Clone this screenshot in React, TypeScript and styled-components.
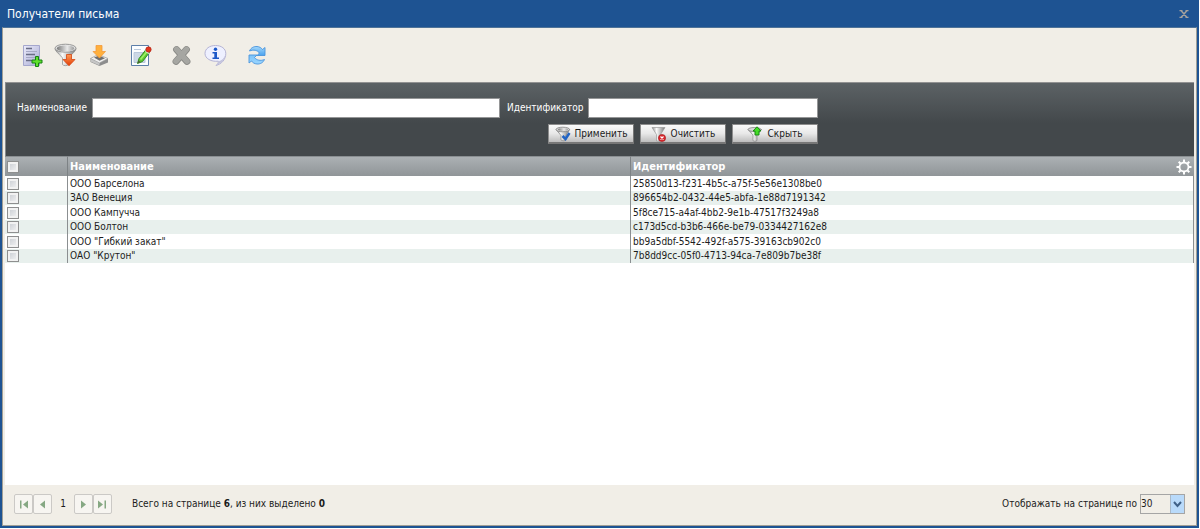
import React, { useState } from 'react';
import styled, { createGlobalStyle } from 'styled-components';

const GlobalStyle = createGlobalStyle`
  *, *::before, *::after { box-sizing: border-box; }
  body {
    margin: 0;
    background: #fff;
    color: #1c1c1c;
    font: 10px/14px 'DejaVu Sans Condensed', 'Noto Sans', sans-serif;
  }
  button, input, select { font: inherit; color: inherit; margin: 0; }
`;

const Page = styled.div`
  display: flex;
  min-height: 100vh;
  padding: 0 1px 1px 0;
`;

const Dialog = styled.section`
  flex: 1;
  min-width: 0;
  display: flex;
  flex-direction: column;
  padding: 0 2px 2px;
  background: #1e5392;
`;

const TitleBar = styled.header`
  display: flex;
  align-items: center;
  justify-content: space-between;
  height: 27px;
  padding: 0 5px;
`;

const Title = styled.h1`
  margin: 0;
  color: #fff;
  font-size: 12px;
  font-weight: normal;
`;

const CloseButton = styled.button`
  width: 16px;
  height: 16px;
  padding: 0;
  border: 0;
  background: none;
  svg { display: block; margin: auto; }
`;

const Content = styled.div`
  flex: 1;
  display: flex;
  flex-direction: column;
  border: 1px solid #a19f96;
  border-top-color: #4f7398;
  background: #f1eee7;
`;

const Toolbar = styled.div`
  display: flex;
  align-items: center;
  gap: 17px;
  height: 54px;
  padding: 0 17px;
`;

const ToolGroup = styled.div`
  display: flex;
  gap: 10px;
`;

const ToolButton = styled.button`
  width: 24px;
  height: 24px;
  padding: 0;
  border: 0;
  background: none;
  svg { display: block; }
`;

const Main = styled.div`
  flex: 1;
  display: flex;
  flex-direction: column;
  margin: 0 2px;
  background: #fff;
`;

const FilterPanel = styled.div`
  height: 74px;
  padding: 15px 11px 0;
  border-top: 1px solid #929292;
  border-left: 1px solid #85898b;
  background: linear-gradient(#5c6265, #43484b 55%);
`;

const FilterForm = styled.form`
  display: flex;
  flex-direction: column;
  gap: 6px;
  width: fit-content;
`;

const Fields = styled.div`
  display: flex;
  gap: 7px;
`;

const Field = styled.label`
  display: flex;
  align-items: center;
  gap: 3px;
  color: #fff;
`;

const FieldName = styled.span<{ $width: number }>`
  width: ${(p) => p.$width}px;
  white-space: nowrap;
`;

const TextInput = styled.input<{ $width: number }>`
  width: ${(p) => p.$width}px;
  height: 20px;
  padding: 0 3px;
  border: 1px solid #959697;
  border-radius: 0;
  background: #fff;
  color: #222;
`;

const Actions = styled.div`
  display: flex;
  justify-content: flex-end;
  gap: 6px;
`;

const ActionButton = styled.button`
  display: flex;
  align-items: center;
  justify-content: center;
  gap: 4px;
  width: 86px;
  height: 20px;
  padding: 0;
  border: 1px solid #8d8d8d;
  border-right-color: #777;
  border-bottom: 2px solid #777;
  background: linear-gradient(#fafafa, #e8e8e8 50%, #bdbdbd);
  white-space: nowrap;
`;

const Grid = styled.table`
  width: 100%;
  table-layout: fixed;
  border-collapse: separate;
  border-spacing: 0;
`;

const HeadRow = styled.tr`
  height: 20px;
  background: linear-gradient(#adb2b5, #909598);
`;

const HeadCell = styled.th`
  padding: 0 2px;
  border-top: 1px solid #8a8f92;
  border-right: 1px solid #7d8285;
  color: #fff;
  font-size: 11px;
  text-align: left;
  &:last-child { border-right: 0; }
`;

const HeadInner = styled.div`
  display: flex;
  align-items: center;
  justify-content: space-between;
`;

const GearButton = styled.button`
  padding: 0;
  border: 0;
  background: none;
  svg { display: block; }
`;

const Row = styled.tr`
  height: 15px;
  &:nth-child(even) { height: 14px; background: #e8f0ed; }
`;

const Cell = styled.td`
  padding: 0 2px;
  border-right: 1px solid #8b8f91;
  line-height: 14px;
`;

const Check = styled.input.attrs({ type: 'checkbox' })`
  display: block;
  appearance: none;
  width: 12px;
  height: 12px;
  border: 1px solid #8e8f8f;
  background: linear-gradient(135deg, #c6cad0, #f6f6f6);
  box-shadow: inset 0 0 0 2px #f2f2f2;
  &:checked { background: #38649a; }
`;

const Footer = styled.footer`
  display: flex;
  align-items: center;
  justify-content: space-between;
  height: 40px;
  padding: 0 11px 2px;
`;

const Pager = styled.nav`
  display: flex;
  align-items: center;
`;

const PageButton = styled.button`
  display: grid;
  place-items: center;
  width: 19px;
  height: 20px;
  padding: 0;
  border: 1px solid #cbc9c6;
  border-radius: 2px;
  background: #f7f5f1;
`;

const PageNumber = styled.span`
  width: 22px;
  text-align: center;
`;

const Summary = styled.span`
  margin-left: 20px;
`;

const PageSize = styled.label`
  display: flex;
  align-items: center;
  gap: 3px;
`;

const SelectBox = styled.span`
  display: grid;
  grid-template-columns: 1fr 14px;
  width: 45px;
  height: 20px;
  border: 1px solid #a5a5a5;
`;

const Select = styled.select`
  grid-area: 1 / 1 / 2 / 3;
  appearance: none;
  padding: 0;
  border: 0;
  border-radius: 0;
  background: transparent;
`;

const SelectArrow = styled.span`
  grid-area: 1 / 2;
  display: grid;
  place-items: center;
  border-left: 1px solid #a9b9c9;
  background: #b9dafa;
  pointer-events: none;
`;

const Svg = ({ size = 24, children }: { size?: number; children: React.ReactNode }) => (
  <svg width={size} height={size} viewBox={`0 0 ${size} ${size}`} fill="none" aria-hidden="true">
    {children}
  </svg>
);

const AddIcon = () => (
  <Svg>
    <defs>
      <linearGradient id="sheet" x2="1" y2="1"><stop stopColor="#ececfa" /><stop offset="1" stopColor="#a9abd4" /></linearGradient>
    </defs>
    <path d="M3.500 2.500h16v20h-16z" fill="url(#sheet)" stroke="#a5a7cd" />
    <path d="M6 5.500h6M6 11.500h9M6 17.500h6" stroke="#6a6d86" strokeWidth="1.400" />
    <path d="M6 8.500h11M6 14.500h9" stroke="#a6a8c4" />
    <path d="M15.500 13.500h3v3.500h3.500v3h-3.500v3.500h-3v-3.500h-3.500v-3h3.500z" fill="#5fe02c" stroke="#168014" />
  </Svg>
);

const FunnelDownIcon = () => (
  <Svg>
    <defs>
      <linearGradient id="metal"><stop stopColor="#8d8d8d" /><stop offset=".35" stopColor="#fafafa" /><stop offset=".7" stopColor="#b5b5b5" /><stop offset="1" stopColor="#777" /></linearGradient>
      <linearGradient id="rim"><stop stopColor="#777" /><stop offset=".6" stopColor="#e9e9e9" /><stop offset="1" stopColor="#999" /></linearGradient>
      <linearGradient id="hot" x2="0" y2="1"><stop stopColor="#ff9a55" /><stop offset="1" stopColor="#e33c05" /></linearGradient>
    </defs>
    <path d="M1 5.500c0 3 6.500 7.500 7.500 9.500v6.500c1 1.500 5 1.500 6 0V15c1-2 7.500-6.500 7.500-9.500z" fill="url(#metal)" stroke="#8a8a8a" strokeWidth=".7" />
    <ellipse cx="11.500" cy="5.200" rx="10.500" ry="4" fill="#e4e4e4" stroke="#858585" strokeWidth=".8" />
    <ellipse cx="11.500" cy="5.400" rx="8.800" ry="2.900" fill="url(#rim)" />
    <path d="M12.500 11.500h5v5h3.500L15 22.800 9 16.500h3.500z" fill="url(#hot)" stroke="#d4440f" strokeWidth=".8" />
  </Svg>
);

const ImportIcon = () => (
  <Svg>
    <path d="M2.500 15.500 10 12l10 4v3.500L11.500 23l-9-4z" fill="#8d8d8d" />
    <path d="M2.500 15.500 10 11.500l10 4L11.500 20z" fill="#efefef" stroke="#9b9b9b" strokeWidth=".7" />
    <path d="M3 16l8.500 4v2.500L3 18.800z" fill="#c6c6c6" />
    <path d="M6 14.500l5-2 6 2.700-5.500 2.600z" fill="#6f6f6f" />
    <path d="M8 2.500h6v6h3.500L11.500 15 5 8.500h3z" fill="#ffb03d" stroke="#f4993a" strokeWidth=".8" />
  </Svg>
);

const EditIcon = () => (
  <Svg>
    <path d="M2.500 2.500h17v20h-17z" fill="#fbfdff" stroke="#5d7fa9" />
    <path d="M5 6.500h7M5 9.500h11v10H5z" stroke="#b9c8db" fill="#ccd8e6" />
    <path d="M8.500 20.500l1.500-5L17 6.500l3.500 3-7 9z" fill="#5cc832" stroke="#2b8417" strokeWidth=".9" />
    <path d="M11.500 16.500l6.500-8" stroke="#9df065" strokeWidth="1.800" />
    <path d="M8.500 20.500l1-3 2 1.600z" fill="#4b5a33" />
    <path d="M16.500 7.500l3.300 3" stroke="#eee" strokeWidth="1.500" />
    <circle cx="19.500" cy="6.500" r="2.700" fill="#e2351d" stroke="#a81f11" strokeWidth=".6" />
  </Svg>
);

const DeleteIcon = () => (
  <Svg>
    <path d="M6.500 6.500l10.500 12M16.500 6.500L6 18.500" stroke="#878784" strokeWidth="6.800" strokeLinecap="round" />
    <path d="M6.500 6.300l10.500 12M16.500 6.300L6 18.300" stroke="#a6a6a2" strokeWidth="5.400" strokeLinecap="round" />
  </Svg>
);

const InfoIcon = () => (
  <Svg>
    <path d="M11.500 2.500c6 0 10.300 3.200 10.300 8 0 6-4.300 10.500-9.800 12 1.800-1.600 2.500-2.800 2.300-4.300C7 19 1 15.500 1 10.500c0-4.800 4.500-8 10.500-8z" fill="#eef0ff" stroke="#b4b3d4" />
    <path d="M12 22.300c6-2 9.500-6.500 9.700-12-1 5-4 7.500-7.300 8.200.2 1.500-.8 2.600-2.400 3.800z" fill="#c2c2dc" />
    <circle cx="11.500" cy="6.200" r="1.700" fill="#1b57c8" />
    <path d="M8.500 9h4.500v5.500h2V16H8.500v-1.500h1.800v-4H8.500z" fill="#1b57c8" />
  </Svg>
);

const RefreshIcon = () => (
  <Svg>
    <defs>
      <linearGradient id="sky" x2="0" y2="1"><stop stopColor="#a4d8fb" /><stop offset="1" stopColor="#4aa2ee" /></linearGradient>
      <linearGradient id="sea" x2="0" y2="1"><stop stopColor="#7cc3f8" /><stop offset="1" stopColor="#9bd6ff" /></linearGradient>
    </defs>
    <path d="M4.500 8C6 4.500 9 3.300 12 3.500c2.500.2 4.300 1.300 5.500 3l2.500-2v8h-8l2.500-2.500C12.500 7.300 8.500 6.300 4.500 8z" fill="url(#sky)" stroke="#4a94dc" strokeWidth=".9" />
    <path d="M19.500 16.500c-1.500 3.500-4.500 4.700-7.500 4.500-2.500-.2-4.300-1.300-5.500-3l-2.500 2v-8h8L9.500 14.500c2 2.700 6 3.700 10 2z" fill="url(#sea)" stroke="#4a94dc" strokeWidth=".9" />
  </Svg>
);

const ApplyIcon = () => (
  <Svg size={16}>
    <path d="M1 3.500 6 9.500V14c1 1 4 1 5 0V9.500L14.500 3.500z" fill="url(#metal)" stroke="#777" strokeWidth=".6" />
    <ellipse cx="7.800" cy="3.500" rx="6.800" ry="2.300" fill="#d8d8d8" stroke="#777" strokeWidth=".7" />
    <ellipse cx="8" cy="3.600" rx="5" ry="1.400" fill="url(#rim)" />
    <path d="M7.500 10l3 3L14.500 7" stroke="#2264c4" strokeWidth="2.500" />
  </Svg>
);

const ClearIcon = () => (
  <Svg size={16}>
    <path d="M1 1.500h13L9.500 8.500V15h-4V8.500z" fill="url(#metal)" stroke="#999" strokeWidth=".7" />
    <circle cx="11" cy="12" r="3.600" fill="#d8262c" stroke="#a3151a" strokeWidth=".6" />
    <path d="M9.500 10.500l3 3M12.500 10.500l-3 3" stroke="#fff" strokeWidth="1.200" />
  </Svg>
);

const HideIcon = () => (
  <Svg size={16}>
    <path d="M1 3.500 6 9V14.500c1 1 3 1 4 0V9L14.500 3.500z" fill="url(#metal)" stroke="#777" strokeWidth=".6" />
    <ellipse cx="7.500" cy="3.500" rx="6.500" ry="2" fill="#d8d8d8" stroke="#777" strokeWidth=".7" />
    <path d="M10 .8 14 5h-2v4H8V5H6z" fill="#45dc28" stroke="#13830f" strokeWidth=".9" />
  </Svg>
);

const GearIcon = () => (
  <Svg size={16}>
    <circle cx="8" cy="8" r="4.500" stroke="#fff" strokeWidth="1.800" />
    <path d="M8 .5V3M8 13v2.500M.5 8H3M13 8h2.500M2.700 2.700l1.800 1.800M11.500 11.500l1.800 1.800M13.300 2.700l-1.800 1.800M4.500 11.500l-1.800 1.800" stroke="#fff" strokeWidth="2" />
  </Svg>
);

const PagerIcon = ({ back, bar }: { back?: boolean; bar?: boolean }) => (
  <svg width="9" height="9" viewBox="0 0 9 9" aria-hidden="true" fill="#86a883">
    <g transform={back ? 'translate(9) scale(-1 1)' : undefined}>
      {bar ? <path d="M0 .5v8l5-4zM6.500.5h1.500v8H6.500z" /> : <path d="M2 .5v8l5-4z" />}
    </g>
  </svg>
);

const toolGroups = [
  [
    { label: 'Добавить', Icon: AddIcon },
    { label: 'Показать фильтр', Icon: FunnelDownIcon },
    { label: 'Загрузить', Icon: ImportIcon },
  ],
  [{ label: 'Изменить', Icon: EditIcon }],
  [
    { label: 'Удалить', Icon: DeleteIcon },
    { label: 'Сведения', Icon: InfoIcon },
  ],
  [{ label: 'Обновить', Icon: RefreshIcon }],
];

const recipients = [
  { name: 'ООО Барселона', id: '25850d13-f231-4b5c-a75f-5e56e1308be0' },
  { name: 'ЗАО Венеция', id: '896654b2-0432-44e5-abfa-1e88d7191342' },
  { name: 'ООО Кампучча', id: '5f8ce715-a4af-4bb2-9e1b-47517f3249a8' },
  { name: 'ООО Болтон', id: 'c173d5cd-b3b6-466e-be79-0334427162e8' },
  { name: 'ООО "Гибкий закат"', id: 'bb9a5dbf-5542-492f-a575-39163cb902c0' },
  { name: 'ОАО "Крутон"', id: '7b8dd9cc-05f0-4713-94ca-7e809b7be38f' },
];

export default function App() {
  const [selected, setSelected] = useState<string[]>([]);
  const toggle = (id: string) =>
    setSelected((s) => (s.includes(id) ? s.filter((x) => x !== id) : [...s, id]));
  const all = selected.length === recipients.length;

  return (
    <Page>
      <GlobalStyle />
      <Dialog>
        <TitleBar>
          <Title>Получатели письма</Title>
          <CloseButton aria-label="Закрыть">
            <svg width="10" height="8" viewBox="0 0 10 8" aria-hidden="true">
              <path d="M2 .5l6 7M8 .5l-6 7M.5.5h3M6.500.5h3M.5 7.500h3M6.500 7.500h3" stroke="#a5a29d" strokeWidth="1.500" />
            </svg>
          </CloseButton>
        </TitleBar>
        <Content>
          <Toolbar>
            {toolGroups.map((group) => (
              <ToolGroup key={group[0].label}>
                {group.map(({ label, Icon }) => (
                  <ToolButton key={label} aria-label={label}>
                    <Icon />
                  </ToolButton>
                ))}
              </ToolGroup>
            ))}
          </Toolbar>
          <Main>
            <FilterPanel>
              <FilterForm onSubmit={(e) => e.preventDefault()}>
                <Fields>
                  <Field>
                    <FieldName $width={72}>Наименование</FieldName>
                    <TextInput $width={408} />
                  </Field>
                  <Field>
                    <FieldName $width={78}>Идентификатор</FieldName>
                    <TextInput $width={230} />
                  </Field>
                </Fields>
                <Actions>
                  <ActionButton type="submit"><ApplyIcon />Применить</ActionButton>
                  <ActionButton type="reset"><ClearIcon />Очистить</ActionButton>
                  <ActionButton type="button"><HideIcon />Скрыть</ActionButton>
                </Actions>
              </FilterForm>
            </FilterPanel>
            <Grid>
              <colgroup>
                <col style={{ width: 63 }} />
                <col />
                <col />
              </colgroup>
              <thead>
                <HeadRow>
                  <HeadCell>
                    <Check
                      aria-label="Выделить все"
                      checked={all}
                      onChange={() => setSelected(all ? [] : recipients.map((r) => r.id))}
                    />
                  </HeadCell>
                  <HeadCell>Наименование</HeadCell>
                  <HeadCell>
                    <HeadInner>
                      Идентификатор
                      <GearButton aria-label="Настройка столбцов"><GearIcon /></GearButton>
                    </HeadInner>
                  </HeadCell>
                </HeadRow>
              </thead>
              <tbody>
                {recipients.map((r) => (
                  <Row key={r.id}>
                    <Cell>
                      <Check aria-label={r.name} checked={selected.includes(r.id)} onChange={() => toggle(r.id)} />
                    </Cell>
                    <Cell>{r.name}</Cell>
                    <Cell>{r.id}</Cell>
                  </Row>
                ))}
              </tbody>
            </Grid>
          </Main>
          <Footer>
            <Pager aria-label="Страницы">
              <PageButton aria-label="Первая"><PagerIcon back bar /></PageButton>
              <PageButton aria-label="Предыдущая"><PagerIcon back /></PageButton>
              <PageNumber>1</PageNumber>
              <PageButton aria-label="Следующая"><PagerIcon /></PageButton>
              <PageButton aria-label="Последняя"><PagerIcon bar /></PageButton>
              <Summary>
                Всего на странице <b>6</b>, из них выделено <b>{selected.length}</b>
              </Summary>
            </Pager>
            <PageSize>
              Отображать на странице по
              <SelectBox>
                <Select defaultValue="30">
                  <option>30</option>
                  <option>50</option>
                </Select>
                <SelectArrow>
                  <svg width="9" height="7" viewBox="0 0 9 7" aria-hidden="true">
                    <path d="M1 1l3.500 4L8 1" fill="none" stroke="#3f6188" strokeWidth="2" />
                  </svg>
                </SelectArrow>
              </SelectBox>
            </PageSize>
          </Footer>
        </Content>
      </Dialog>
    </Page>
  );
}
